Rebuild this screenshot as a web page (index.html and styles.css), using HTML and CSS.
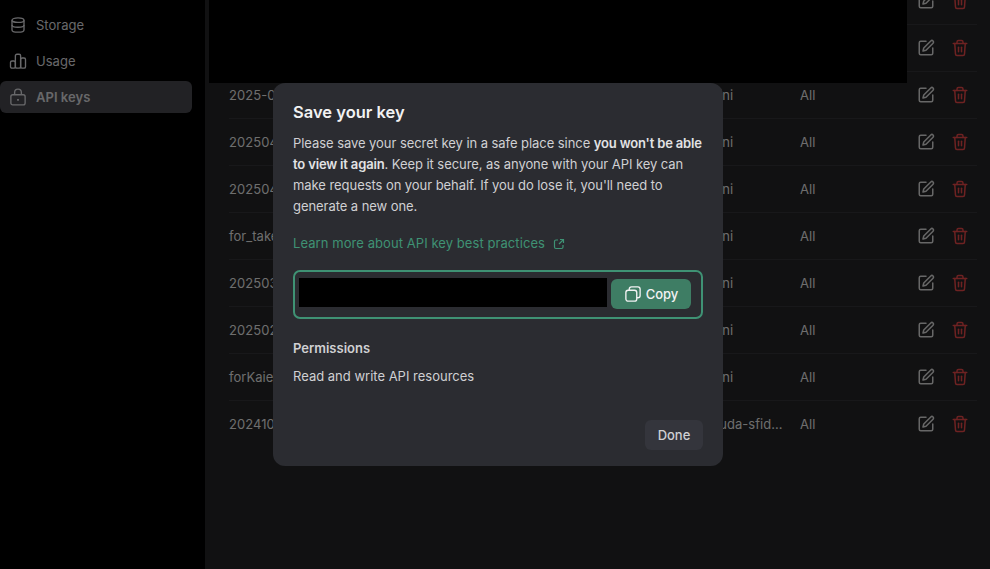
FILE: index.html
```html
<!DOCTYPE html>
<html lang="en">
<head>
  <meta charset="UTF-8" />
  <meta name="viewport" content="width=device-width, initial-scale=1.0"/>
  <title>API keys</title>
  <link rel="stylesheet" href="styles.css">
</head>
<body>

  <svg class="icon-defs" width="0" height="0">
    <symbol id="icon-edit" viewBox="0 0 24 24">
      <path d="M12 3H5a2 2 0 0 0-2 2v14a2 2 0 0 0 2 2h14a2 2 0 0 0 2-2v-7"/>
      <path d="M18.4 2.600a2.100 2.100 0 1 1 3 3L12 15l-4 1 1-4Z"/>
    </symbol>
    <symbol id="icon-trash" viewBox="0 0 24 24">
      <path d="M3 6h18"/>
      <path d="M5 6l1 14c0 1 1 2 2 2h8c1 0 2-1 2-2l1-14"/>
      <path d="M8 6V4c0-1 1-2 2-2h4c1 0 2 1 2 2v2"/>
      <path d="M10 11v6"/>
      <path d="M14 11v6"/>
    </symbol>
  </svg>

  <div class="sidebar">
    <a class="nav-item">
      <svg class="nav-icon" viewBox="0 0 24 24"><ellipse cx="12" cy="5.500" rx="8" ry="3"/><path d="M4 5.500v13c0 1.700 3.600 3 8 3s8-1.300 8-3v-13"/><path d="M4 12c0 1.700 3.600 3 8 3s8-1.300 8-3"/></svg>
      Storage
    </a>
    <a class="nav-item">
      <svg class="nav-icon" viewBox="0 0 24 24"><rect x="2" y="12" width="6.500" height="9.500" rx="2"/><rect x="8.500" y="3" width="7" height="18.500" rx="2"/><rect x="15.500" y="8" width="6.500" height="13.500" rx="2"/></svg>
      Usage
    </a>
    <a class="nav-item active">
      <svg class="nav-icon" viewBox="0 0 24 24"><rect x="2.500" y="9" width="19" height="13.500" rx="2.500"/><path d="M7.500 9V6a4.500 4.500 0 0 1 9 0v3"/><path class="keyhole" d="M12 14.500v2.500"/></svg>
      API keys
    </a>
  </div>

  <div class="main">
    <div class="key-table">
      <div class="key-row"><span>2025-04-key</span><span class="key-id">gemini</span><span>All</span><div class="actions"><button class="icon-btn"><svg class="edit"><use href="#icon-edit"/></svg></button><button class="icon-btn"><svg class="trash"><use href="#icon-trash"/></svg></button></div></div>
      <div class="key-row"><span>2025-04-key</span><span class="key-id">gemini</span><span>All</span><div class="actions"><button class="icon-btn"><svg class="edit"><use href="#icon-edit"/></svg></button><button class="icon-btn"><svg class="trash"><use href="#icon-trash"/></svg></button></div></div>
      <div class="key-row"><span>2025-04-key</span><span class="key-id">gemini</span><span>All</span><div class="actions"><button class="icon-btn"><svg class="edit"><use href="#icon-edit"/></svg></button><button class="icon-btn"><svg class="trash"><use href="#icon-trash"/></svg></button></div></div>
      <div class="key-row"><span>20250422</span><span class="key-id">gemini</span><span>All</span><div class="actions"><button class="icon-btn"><svg class="edit"><use href="#icon-edit"/></svg></button><button class="icon-btn"><svg class="trash"><use href="#icon-trash"/></svg></button></div></div>
      <div class="key-row"><span>20250408</span><span class="key-id">gemini</span><span>All</span><div class="actions"><button class="icon-btn"><svg class="edit"><use href="#icon-edit"/></svg></button><button class="icon-btn"><svg class="trash"><use href="#icon-trash"/></svg></button></div></div>
      <div class="key-row"><span>for_take</span><span class="key-id">gemini</span><span>All</span><div class="actions"><button class="icon-btn"><svg class="edit"><use href="#icon-edit"/></svg></button><button class="icon-btn"><svg class="trash"><use href="#icon-trash"/></svg></button></div></div>
      <div class="key-row"><span>20250317</span><span class="key-id">gemini</span><span>All</span><div class="actions"><button class="icon-btn"><svg class="edit"><use href="#icon-edit"/></svg></button><button class="icon-btn"><svg class="trash"><use href="#icon-trash"/></svg></button></div></div>
      <div class="key-row"><span>20250221</span><span class="key-id">gemini</span><span>All</span><div class="actions"><button class="icon-btn"><svg class="edit"><use href="#icon-edit"/></svg></button><button class="icon-btn"><svg class="trash"><use href="#icon-trash"/></svg></button></div></div>
      <div class="key-row"><span>forKaien</span><span class="key-id">gemini</span><span>All</span><div class="actions"><button class="icon-btn"><svg class="edit"><use href="#icon-edit"/></svg></button><button class="icon-btn"><svg class="trash"><use href="#icon-trash"/></svg></button></div></div>
      <div class="key-row"><span>20241016</span><span class="key-id">key-uda-sfidclient</span><span>All</span><div class="actions"><button class="icon-btn"><svg class="edit"><use href="#icon-edit"/></svg></button><button class="icon-btn"><svg class="trash"><use href="#icon-trash"/></svg></button></div></div>
    </div>
    <div class="redacted-block"></div>
  </div>

  <div class="scrim"></div>

  <div class="modal-wrap">
    <div class="modal">
      <h2>Save your key</h2>
      <p class="modal-text">Please save your secret key in a safe place since <b>you won't be able to view it again</b>. Keep it secure, as anyone with your API key can make requests on your behalf. If you do lose it, you'll need to generate a new one.</p>
      <a class="learn-link">Learn more about API key best practices
        <svg class="link-icon" viewBox="0 0 24 24"><path d="M10 4H6a3 3 0 0 0-3 3v11a3 3 0 0 0 3 3h11a3 3 0 0 0 3-3v-4"/><path d="M14 3h7v7"/><path d="M21 3l-9 9"/></svg>
      </a>
      <div class="key-field">
        <div class="key-value"></div>
        <button class="copy-btn">
          <svg class="copy-icon" viewBox="0 0 24 24"><rect x="2.500" y="7" width="14.500" height="14.500" rx="3"/><path d="M7 7V5.500a3 3 0 0 1 3-3h8.500a3 3 0 0 1 3 3V14a3 3 0 0 1-3 3H17"/></svg>
          Copy
        </button>
      </div>
      <div class="perm-title">Permissions</div>
      <div class="perm-text">Read and write API resources</div>
      <div class="modal-footer">
        <button class="done-btn">Done</button>
      </div>
    </div>
  </div>

</body>
</html>
```

FILE: styles.css
```css
* {
  box-sizing: border-box;
}

html, body {
  height: 100%;
}

body {
  margin: 0;
  display: flex;
  overflow: hidden;
  background: #232324;
  color: #ddd;
  font-family: Inter, "Noto Sans", sans-serif;
  font-size: 14px;
}

.icon-defs {
  position: absolute;
}

/* sidebar */
.sidebar {
  width: 205px;
  flex-shrink: 0;
  background: #000;
  padding-top: 9px;
  display: flex;
  flex-direction: column;
  gap: 4px;
}

.nav-item {
  width: 192px;
  height: 32px;
  display: flex;
  align-items: center;
  gap: 9px;
  padding-left: 9px;
  border-radius: 6px;
  color: #d0d0d4;
  font-size: 13px;
  letter-spacing: 0.03px;
}

.nav-item.active {
  background: #44454b;
  font-weight: 600;
}

.nav-icon {
  width: 18px;
  height: 18px;
  fill: none;
  stroke: #d0d0d4;
  stroke-width: 1.800;
}

.keyhole {
  stroke-width: 2.400;
}

/* table */
.main {
  flex: 1;
  position: relative;
  padding: 0 13px 0 24px;
}

.key-table {
  margin-top: -22px;
}

.key-row {
  display: grid;
  grid-template-columns: 463px 108px 1fr 68px;
  align-items: center;
  height: 47px;
  border-bottom: 1px solid #303135;
  color: #dcdcdc;
  font-size: 13px;
  letter-spacing: 0.05px;
}

.key-row:last-child {
  border-bottom-color: transparent;
}

.key-id {
  width: 92px;
  overflow: hidden;
  white-space: nowrap;
  text-overflow: ellipsis;
}

.actions {
  display: flex;
}

.icon-btn {
  width: 34px;
  height: 34px;
  padding: 0 1px 0 0;
  border: none;
  background: none;
  display: flex;
  align-items: center;
  justify-content: center;
}

.icon-btn svg {
  width: 18px;
  height: 18px;
  fill: none;
  stroke-width: 2;
  stroke-linecap: round;
  stroke-linejoin: round;
}

.edit {
  stroke: #cfcfcf;
}

.trash {
  stroke: #dc4444;
}

.redacted-block {
  position: absolute;
  top: 0;
  left: 4px;
  width: 698px;
  height: 83px;
  background: #000;
}

/* modal */
.scrim {
  position: fixed;
  inset: 0;
  background: rgba(0, 0, 0, 0.5);
}

.modal-wrap {
  position: fixed;
  inset: 0;
  padding: 83px 0 0 273px;
}

.modal {
  width: 450px;
  height: 383px;
  padding: 17px 20px 16px;
  background: #2b2c31;
  border-radius: 12px;
  display: flex;
  flex-direction: column;
}

.modal h2 {
  margin: 0 0 9px;
  font-size: 16.500px;
  line-height: 24px;
  font-weight: 600;
  color: #f2f2f3;
}

.modal-text {
  margin: 0;
  font-size: 13px;
  line-height: 21px;
  letter-spacing: -0.060px;
  color: #d0d0d3;
}

.modal-text b {
  font-weight: 600;
  letter-spacing: -0.160px;
  color: #e2e2e4;
}

.learn-link {
  margin-top: 16px;
  display: flex;
  align-items: center;
  gap: 8px;
  font-size: 13px;
  line-height: 21px;
  letter-spacing: 0.070px;
  color: #3f9274;
}

.link-icon {
  width: 12px;
  height: 12px;
  fill: none;
  stroke: #3f9274;
  stroke-width: 2.400;
}

.key-field {
  margin-top: 15.500px;
  height: 49px;
  border: 2px solid #3f9274;
  border-radius: 7px;
  padding-left: 4px;
  display: flex;
  align-items: center;
  gap: 4px;
}

.key-value {
  width: 308px;
  height: 29px;
  margin-top: -3px;
  background: #000;
}

.copy-btn {
  width: 80px;
  height: 30px;
  border: none;
  border-radius: 6px;
  background: #3e7d64;
  color: #f2f2f3;
  font-family: inherit;
  font-size: 13px;
  font-weight: 500;
  display: flex;
  align-items: center;
  justify-content: center;
  gap: 4px;
}

.copy-icon {
  width: 18px;
  height: 18px;
  fill: none;
  stroke: #f2f2f3;
  stroke-width: 1.800;
}

.perm-title {
  margin-top: 19.500px;
  font-size: 13px;
  line-height: 21px;
  font-weight: 600;
  color: #d0d0d3;
}

.perm-text {
  margin-top: 7px;
  font-size: 13px;
  line-height: 21px;
  color: #d0d0d3;
}

.modal-footer {
  margin-top: auto;
  display: flex;
  justify-content: flex-end;
}

.done-btn {
  width: 58px;
  height: 30px;
  border: none;
  border-radius: 6px;
  background: #34353c;
  color: #d0d0d3;
  font-family: inherit;
  font-size: 13px;
  font-weight: 500;
}
```
